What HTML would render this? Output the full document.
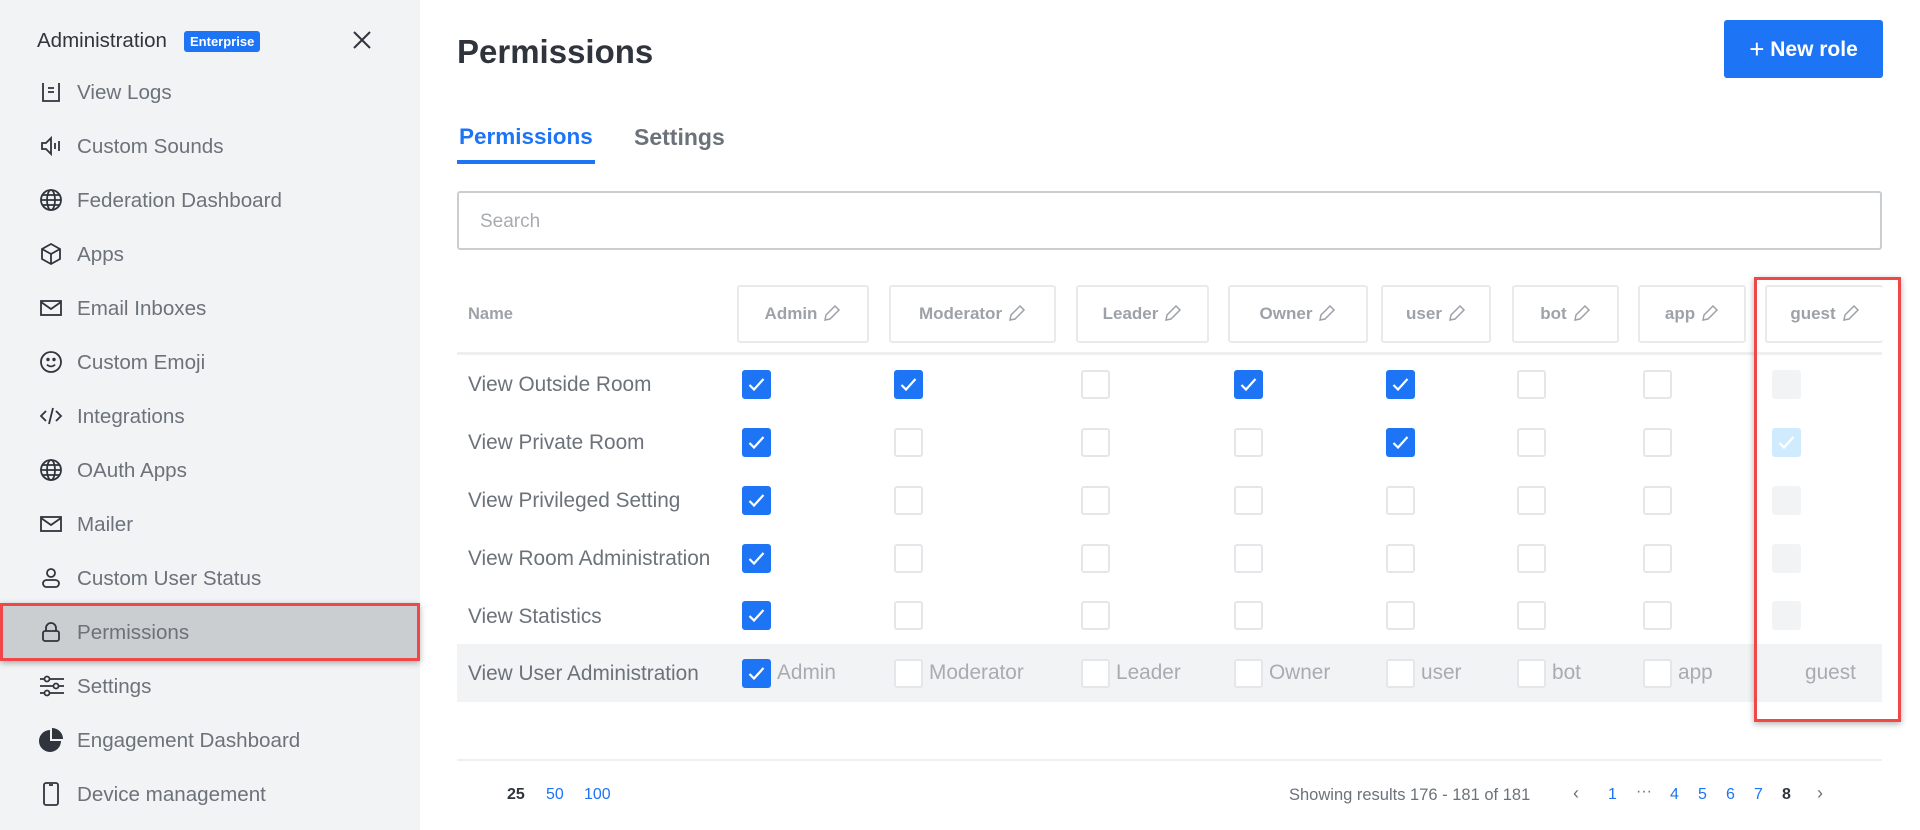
<!DOCTYPE html>
<html><head><meta charset="utf-8"><style>
*{box-sizing:border-box;margin:0;padding:0}
body{width:1920px;height:830px;position:relative;overflow:hidden;background:#fff;font-family:"Liberation Sans",sans-serif;color:#6c727a}
.a{position:absolute;white-space:nowrap}
#side{position:absolute;left:0;top:0;width:420px;height:830px;background:#f2f3f5}
.nav{position:absolute;left:0;width:420px;height:54px}
.nav svg{position:absolute;left:39px;top:15px}
.nav span{position:absolute;left:77px;top:16px;font-size:20.6px;color:#6c727a}
.hd{position:absolute;top:285px;height:58px;border:2px solid #e9eaec;border-radius:3px;font-size:17px;font-weight:bold;color:#9ea2a8;text-align:center;line-height:54px}
.hd svg{vertical-align:-3px;margin-left:6px}
.cb{position:absolute;width:29px;height:29px;border:2px solid #e4e6e9;border-radius:3px;background:#fff}
.cb.on{background:#1d74f5;border-color:#1d74f5}
.cb.dis{background:#f2f3f5;border-color:#f2f3f5}
.cb.dison{background:#d1ebfe;border-color:#d1ebfe}
.cb svg{position:absolute;left:4px;top:5px}
.rl{position:absolute;left:468px;font-size:20.8px;color:#6c727a}
.lb{position:absolute;font-size:20.8px;color:#a8acb1}
</style></head><body>
<div id="side">
<div class="a" style="left:37px;top:29px;font-size:20.5px;color:#2f343d">Administration</div>
<div class="a" style="left:184px;top:31px;background:#1d74f5;color:#fff;font-size:13px;font-weight:bold;padding:3px 6px;border-radius:3px">Enterprise</div>
<svg class="a" style="left:352px;top:30px" width="20" height="20" viewBox="0 0 20 20"><path d="M2 2L18 18M18 2L2 18" stroke="#2f343d" stroke-width="2"/></svg>

<div class="nav" style="top:65px"><svg width="24" height="24" viewBox="0 0 24 24" fill="none" stroke="#2f343d" stroke-width="1.8"><path d="M4 3v18h16V3M9 8h6M9 12h6"/></svg><span>View Logs</span></div>
<div class="nav" style="top:119px"><svg width="24" height="24" viewBox="0 0 24 24" fill="none" stroke="#2f343d" stroke-width="1.8"><path d="M3 9h4l5-5v16l-5-5H3z M16 9v6M20 7v10"/></svg><span>Custom Sounds</span></div>
<div class="nav" style="top:173px"><svg width="24" height="24" viewBox="0 0 24 24" fill="none" stroke="#2f343d" stroke-width="1.8"><circle cx="12" cy="12" r="10"/><ellipse cx="12" cy="12" rx="4" ry="10"/><path d="M2 12h20M4 7h16M4 17h16"/></svg><span>Federation Dashboard</span></div>
<div class="nav" style="top:227px"><svg width="24" height="24" viewBox="0 0 24 24" fill="none" stroke="#2f343d" stroke-width="1.8"><path d="M12 2l9 5v10l-9 5-9-5V7z M3 7l9 5 9-5M12 12v10"/></svg><span>Apps</span></div>
<div class="nav" style="top:281px"><svg width="24" height="24" viewBox="0 0 24 24" fill="none" stroke="#2f343d" stroke-width="1.8"><rect x="2" y="5" width="20" height="14"/><path d="M2 6l10 7 10-7"/></svg><span>Email Inboxes</span></div>
<div class="nav" style="top:335px"><svg width="24" height="24" viewBox="0 0 24 24" fill="none" stroke="#2f343d" stroke-width="1.8"><circle cx="12" cy="12" r="10"/><path d="M8 14.5c2 2.5 6 2.5 8 0"/><circle cx="9" cy="9.5" r=".8" fill="#2f343d"/><circle cx="15" cy="9.5" r=".8" fill="#2f343d"/></svg><span>Custom Emoji</span></div>
<div class="nav" style="top:389px"><svg width="24" height="24" viewBox="0 0 24 24" fill="none" stroke="#2f343d" stroke-width="1.8"><path d="M7 7l-5 5 5 5M17 7l5 5-5 5M14 4l-4 16"/></svg><span>Integrations</span></div>
<div class="nav" style="top:443px"><svg width="24" height="24" viewBox="0 0 24 24" fill="none" stroke="#2f343d" stroke-width="1.8"><circle cx="12" cy="12" r="10"/><ellipse cx="12" cy="12" rx="4" ry="10"/><path d="M2 12h20M4 7h16M4 17h16"/></svg><span>OAuth Apps</span></div>
<div class="nav" style="top:497px"><svg width="24" height="24" viewBox="0 0 24 24" fill="none" stroke="#2f343d" stroke-width="1.8"><rect x="2" y="5" width="20" height="14"/><path d="M2 6l10 7 10-7"/></svg><span>Mailer</span></div>
<div class="nav" style="top:551px"><svg width="24" height="24" viewBox="0 0 24 24" fill="none" stroke="#2f343d" stroke-width="1.8"><circle cx="12" cy="7" r="4"/><rect x="4" y="14" width="16" height="7" rx="3.5"/></svg><span>Custom User Status</span></div>
<div class="nav" style="top:603px;height:58px;background:#cbced1;border:3px solid #f04848;box-shadow:0 2px 6px rgba(0,0,0,.3)"><svg width="24" height="24" viewBox="0 0 24 24" fill="none" stroke="#2f343d" stroke-width="1.8" style="left:36px;top:14px"><path d="M7 11V8a5 5 0 0110 0v3"/><rect x="4" y="11" width="16" height="10" rx="2"/></svg><span style="left:74px;top:15px">Permissions</span></div>
<div class="nav" style="top:659px"><svg width="26" height="24" viewBox="0 0 26 24" fill="none" stroke="#2f343d" stroke-width="1.8"><path d="M1 5h24M1 12h24M1 19h24"/><circle cx="8" cy="5" r="2.5" fill="#f2f3f5"/><circle cx="17" cy="12" r="2.5" fill="#f2f3f5"/><circle cx="8" cy="19" r="2.5" fill="#f2f3f5"/></svg><span>Settings</span></div>
<div class="nav" style="top:713px"><svg width="24" height="24" viewBox="0 0 24 24"><path d="M11 2v11h11A11 11 0 1111 2z" fill="#2f343d"/><path d="M13 0a11 11 0 0111 11H13z" fill="#2f343d"/></svg><span>Engagement Dashboard</span></div>
<div class="nav" style="top:767px"><svg width="24" height="24" viewBox="0 0 24 24" fill="none" stroke="#2f343d" stroke-width="1.8"><rect x="5" y="1" width="14" height="22" rx="2"/><path d="M10 3h4"/></svg><span>Device management</span></div>
</div>

<div class="a" style="left:457px;top:33px;font-size:33px;font-weight:bold;color:#2f343d">Permissions</div>
<div class="a" style="left:1724px;top:20px;width:159px;height:58px;background:#1d74f5;border-radius:3px;color:#fff;font-size:21px;font-weight:bold;text-align:center;line-height:58px"><span style="font-weight:normal;font-size:26px;vertical-align:-2px">+</span> New role</div>

<div class="a" style="left:459px;top:124px;font-size:22.5px;font-weight:bold;color:#1d74f5">Permissions</div>
<div class="a" style="left:457px;top:160px;width:138px;height:4px;background:#1d74f5"></div>
<div class="a" style="left:634px;top:124px;font-size:23px;font-weight:bold;color:#6c727a">Settings</div>

<div class="a" style="left:457px;top:191px;width:1425px;height:59px;border:2px solid #cbced1;border-radius:3px"></div>
<div class="a" style="left:480px;top:211px;font-size:19px;color:#a8acb1">Search</div>

<div class="a" style="left:468px;top:305px;font-size:16.5px;font-weight:bold;color:#9ea2a8">Name</div>
<div class="hd" style="left:737px;width:132px">Admin<svg width="18" height="18" viewBox="0 0 18 18" fill="none" stroke="#9ea2a8" stroke-width="1.5"><path d="M12 2l4 4-9 9-5 1 1-5z"/></svg></div>
<div class="hd" style="left:889px;width:167px">Moderator<svg width="18" height="18" viewBox="0 0 18 18" fill="none" stroke="#9ea2a8" stroke-width="1.5"><path d="M12 2l4 4-9 9-5 1 1-5z"/></svg></div>
<div class="hd" style="left:1076px;width:133px">Leader<svg width="18" height="18" viewBox="0 0 18 18" fill="none" stroke="#9ea2a8" stroke-width="1.5"><path d="M12 2l4 4-9 9-5 1 1-5z"/></svg></div>
<div class="hd" style="left:1228px;width:140px">Owner<svg width="18" height="18" viewBox="0 0 18 18" fill="none" stroke="#9ea2a8" stroke-width="1.5"><path d="M12 2l4 4-9 9-5 1 1-5z"/></svg></div>
<div class="hd" style="left:1381px;width:110px">user<svg width="18" height="18" viewBox="0 0 18 18" fill="none" stroke="#9ea2a8" stroke-width="1.5"><path d="M12 2l4 4-9 9-5 1 1-5z"/></svg></div>
<div class="hd" style="left:1512px;width:107px">bot<svg width="18" height="18" viewBox="0 0 18 18" fill="none" stroke="#9ea2a8" stroke-width="1.5"><path d="M12 2l4 4-9 9-5 1 1-5z"/></svg></div>
<div class="hd" style="left:1638px;width:108px">app<svg width="18" height="18" viewBox="0 0 18 18" fill="none" stroke="#9ea2a8" stroke-width="1.5"><path d="M12 2l4 4-9 9-5 1 1-5z"/></svg></div>
<div class="hd" style="left:1765px;width:118px;border-right:none">guest<svg width="18" height="18" viewBox="0 0 18 18" fill="none" stroke="#9ea2a8" stroke-width="1.5"><path d="M12 2l4 4-9 9-5 1 1-5z"/></svg></div>
<div class="a" style="left:457px;top:352px;width:1425px;height:3px;background:#eeeff1"></div>

<div class="a" style="left:457px;top:644px;width:1425px;height:58px;background:#f2f3f5"></div>

<div class="rl" style="top:373px">View Outside Room</div>
<div class="rl" style="top:431px">View Private Room</div>
<div class="rl" style="top:489px">View Privileged Setting</div>
<div class="rl" style="top:547px">View Room Administration</div>
<div class="rl" style="top:605px">View Statistics</div>
<div class="rl" style="top:662px">View User Administration</div>

<div id="cbs"></div>
<script>
var xs=[742,894,1081,1234,1386,1517,1643,1772];
var ys=[370,428,486,544,601,659];
var on=[[1,1,0,1,1,0,0,2],[1,0,0,0,1,0,0,3],[1,0,0,0,0,0,0,2],[1,0,0,0,0,0,0,2],[1,0,0,0,0,0,0,2],[1,0,0,0,0,0,0,-1]];
var ck='<svg width="17" height="15" viewBox="0 0 17 15"><path d="M1.5 8l4.5 4.5L15.5 2" fill="none" stroke="#fff" stroke-width="2.2"/></svg>';
var h='';
for(var r=0;r<6;r++)for(var c=0;c<8;c++){var v=on[r][c];if(v<0)continue;
var cl=v==1?'on':v==2?'dis':v==3?'dison':'';
h+='<div class="cb '+cl+'" style="left:'+xs[c]+'px;top:'+ys[r]+'px">'+((v==1||v==3)?ck:'')+'</div>';}
document.getElementById('cbs').innerHTML=h;
</script>
<div class="lb" style="left:777px;top:661px">Admin</div>
<div class="lb" style="left:929px;top:661px">Moderator</div>
<div class="lb" style="left:1116px;top:661px">Leader</div>
<div class="lb" style="left:1269px;top:661px">Owner</div>
<div class="lb" style="left:1421px;top:661px">user</div>
<div class="lb" style="left:1552px;top:661px">bot</div>
<div class="lb" style="left:1678px;top:661px">app</div>
<div class="lb" style="left:1805px;top:661px">guest</div>

<div class="a" style="left:1754px;top:277px;width:147px;height:445px;border:3px solid #f04848;box-shadow:0 2px 6px rgba(0,0,0,.3)"></div>

<div class="a" style="left:457px;top:759px;width:1425px;height:2px;background:#eeeff1"></div>
<div class="a" style="left:507px;top:786px;font-size:16px;font-weight:bold;color:#2f343d">25</div>
<div class="a" style="left:546px;top:786px;font-size:16px;color:#1d74f5">50</div>
<div class="a" style="left:584px;top:786px;font-size:16px;color:#1d74f5">100</div>
<div class="a" style="left:1289px;top:786px;font-size:16.5px;color:#6c727a">Showing results 176 - 181 of 181</div>
<div class="a" style="left:1573px;top:783px;font-size:18px;color:#6c727a">‹</div>
<div class="a" style="left:1608px;top:786px;font-size:16px;color:#1d74f5">1</div>
<div class="a" style="left:1636px;top:783px;font-size:16px;color:#6c727a">···</div>
<div class="a" style="left:1670px;top:786px;font-size:16px;color:#1d74f5">4</div>
<div class="a" style="left:1698px;top:786px;font-size:16px;color:#1d74f5">5</div>
<div class="a" style="left:1726px;top:786px;font-size:16px;color:#1d74f5">6</div>
<div class="a" style="left:1754px;top:786px;font-size:16px;color:#1d74f5">7</div>
<div class="a" style="left:1782px;top:786px;font-size:16px;font-weight:bold;color:#2f343d">8</div>
<div class="a" style="left:1817px;top:783px;font-size:18px;color:#6c727a">›</div>
</body></html>
